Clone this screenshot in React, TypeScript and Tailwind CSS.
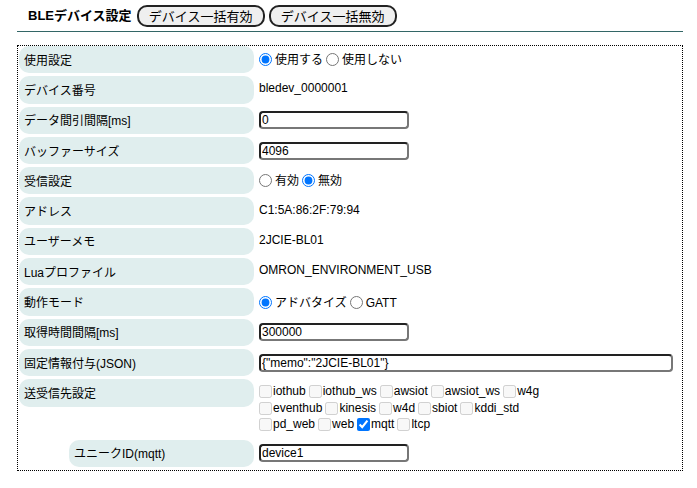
import { ReactNode } from "react";

const font = "font-['Liberation_Sans','Noto_Sans_CJK_JP',sans-serif]";

const Row = ({
  label,
  children,
  indent = false,
}: {
  label: string;
  children: ReactNode;
  indent?: boolean;
}) => {
  return (
    <div className="flex items-start gap-[5px]">
      <div
        className={`flex h-[27.3px] shrink-0 items-center rounded-[10px] bg-[#e0eeee] pt-[2px] pl-[5px] ${
          indent ? "ml-[50px] w-[185px]" : "w-[235px]"
        }`}
      >
        {label}
      </div>
      <div className="flex min-h-[27.3px] flex-1 items-center">{children}</div>
    </div>
  );
};

const TextBox = ({ value, wide = false }: { value: string; wide?: boolean }) => {
  return (
    <input
      type="text"
      defaultValue={value}
      className={`h-[18px] rounded-[4px] border-2 border-t-[#222] border-r-[#777] border-b-[#777] border-l-[#222] bg-white px-[1px] text-[12px] leading-[14px] outline-none ${
        wide ? "w-[414px]" : "w-[150px]"
      }`}
    />
  );
};

const Radio = ({ label, checked, name }: { label: string; checked?: boolean; name: string }) => {
  return (
    <label className="mr-[3px] inline-flex items-center">
      <input
        type="radio"
        name={name}
        defaultChecked={checked}
        className="m-0 mr-[3px] h-[13px] w-[13px]"
      />
      <span className="pt-[1px]">{label}</span>
    </label>
  );
};

const Check = ({ label, checked }: { label: string; checked?: boolean }) => {
  return (
    <label className="mr-[3px] inline-flex items-center">
      <input
        type="checkbox"
        defaultChecked={checked}
        disabled={!checked}
        className="m-0 mr-[1px] h-[13px] w-[13px]"
      />
      <span>{label}</span>
    </label>
  );
};

export default function App() {
  return (
    <div className={`h-[488px] w-[697px] bg-white text-[12px] text-black ${font}`}>
      <div className="ml-[17px] flex w-[666px] items-center border-b border-[#336666] pt-[5px] pb-[4px] pl-[11px]">
        <span className="mr-[5px] text-[13px] font-bold">BLEデバイス設定</span>
        <button className="mr-[4px] h-[22px] w-[128px] rounded-[10px] border-2 border-[#222] bg-[#efefef] text-[13px]">
          デバイス一括有効
        </button>
        <button className="h-[22px] w-[128px] rounded-[10px] border-2 border-[#222] bg-[#efefef] text-[13px]">
          デバイス一括無効
        </button>
      </div>

      <div className="mt-[13px] ml-[17px] flex w-[666px] flex-col gap-[3px] border border-dotted border-black pb-[3px] pl-[1px]">
        <Row label="使用設定">
          <Radio name="use" label="使用する" checked />
          <Radio name="use" label="使用しない" />
        </Row>
        <Row label="デバイス番号">
          <span className="-mt-[3px]">bledev_0000001</span>
        </Row>
        <Row label="データ間引間隔[ms]">
          <TextBox value="0" />
        </Row>
        <Row label="バッファーサイズ">
          <TextBox value="4096" />
        </Row>
        <Row label="受信設定">
          <Radio name="recv" label="有効" />
          <Radio name="recv" label="無効" checked />
        </Row>
        <Row label="アドレス">
          <span className="-mt-[3px]">C1:5A:86:2F:79:94</span>
        </Row>
        <Row label="ユーザーメモ">
          <span className="-mt-[3px]">2JCIE-BL01</span>
        </Row>
        <Row label="Luaプロファイル">
          <span className="-mt-[3px]">OMRON_ENVIRONMENT_USB</span>
        </Row>
        <Row label="動作モード">
          <Radio name="mode" label="アドバタイズ" checked />
          <Radio name="mode" label="GATT" />
        </Row>
        <Row label="取得時間間隔[ms]">
          <TextBox value="300000" />
        </Row>
        <Row label="固定情報付与(JSON)">
          <TextBox value={'{"memo":"2JCIE-BL01"}'} wide />
        </Row>
        <Row label="送受信先設定">
          <div className="flex flex-col pt-[4px] pb-[4px] leading-[16.5px]">
            <div className="flex">
              <Check label="iothub" />
              <Check label="iothub_ws" />
              <Check label="awsiot" />
              <Check label="awsiot_ws" />
              <Check label="w4g" />
            </div>
            <div className="flex">
              <Check label="eventhub" />
              <Check label="kinesis" />
              <Check label="w4d" />
              <Check label="sbiot" />
              <Check label="kddi_std" />
            </div>
            <div className="flex">
              <Check label="pd_web" />
              <Check label="web" />
              <Check label="mqtt" checked />
              <Check label="ltcp" />
            </div>
          </div>
        </Row>
        <Row label="ユニークID(mqtt)" indent>
          <TextBox value="device1" />
        </Row>
      </div>
    </div>
  );
}
